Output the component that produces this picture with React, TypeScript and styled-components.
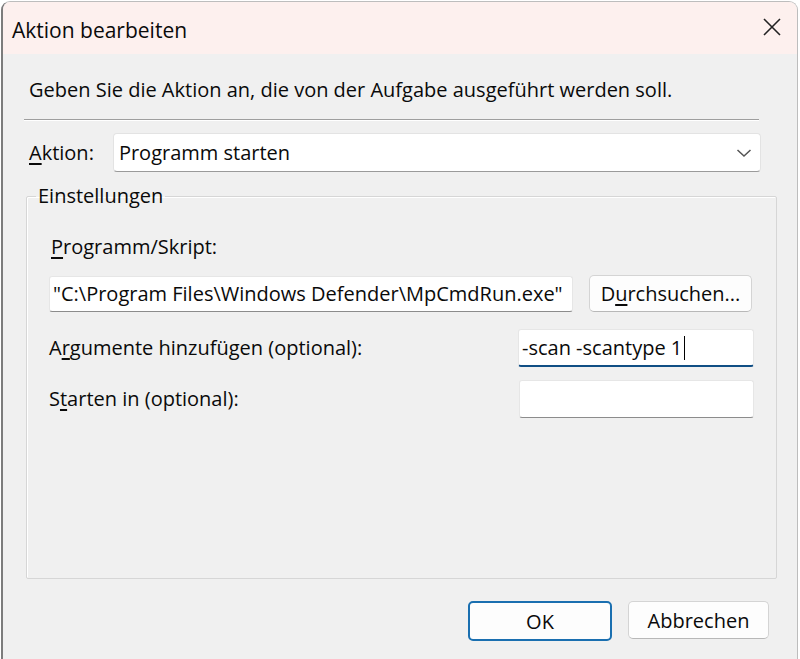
import React from "react";
import styled, { createGlobalStyle } from "styled-components";

const Global = createGlobalStyle`
  html, body { margin: 0; padding: 0; background: #ffffff; }
  body { font-family: "Open Sans", "Noto Sans", sans-serif; color: #0a0a0a; }
  * { box-sizing: border-box; }
`;

const Window = styled.div`
  margin: 1px 2px 0 1px;
  height: 658px;
  display: flex;
  flex-direction: column;
  border: 1px solid #bdbdbd;
  border-left: 2px solid #7c7c7c;
  border-bottom: none;
  border-radius: 9px 9px 0 0;
  background: #f0f0f0;
  overflow: hidden;
  font-size: 20px;
`;

const TitleBar = styled.div`
  height: 52px;
  flex: none;
  display: flex;
  align-items: center;
  justify-content: space-between;
  padding: 3px 13px 0 9px;
  background: #fdf0ee;
`;

const Title = styled.span`
  font-size: 21px;
`;

const CloseButton = styled.button`
  width: 24px;
  height: 24px;
  padding: 0;
  border: none;
  background: transparent;
  display: flex;
  align-items: center;
  justify-content: center;
  margin-top: -6px;
`;

const Body = styled.div`
  flex: 1;
  display: flex;
  flex-direction: column;
  padding: 0 20px 0 21px;
`;

const Description = styled.p`
  margin: 24px 0 0 5px;
  line-height: 24px;
`;

const Separator = styled.div`
  margin: 17px 18px 0 0;
  height: 2px;
  border-top: 1px solid #9e9e9e;
  border-bottom: 1px solid #ffffff;
`;

const ComboRow = styled.div`
  margin: 12px 16px 0 5px;
  display: flex;
  align-items: center;
`;

const Label = styled.label<{ $grow?: boolean }>`
  line-height: 24px;
  flex: ${(p) => (p.$grow ? 1 : "none")};
`;

const Combo = styled.div`
  flex: 1;
  margin-left: 19px;
  height: 39px;
  display: flex;
  align-items: center;
  justify-content: space-between;
  padding: 0 8px 0 5px;
  background: #ffffff;
  border: 1px solid #e3e3e3;
  border-bottom-color: #9a9a9a;
  border-radius: 4px;
`;

const Group = styled.fieldset`
  flex: 1;
  margin: 12px 0 0 2px;
  padding: 0 22px;
  border: 1px solid #d6d6d6;
  border-radius: 2px;
  box-shadow: inset 1px 1px 0 #ffffff;
  min-width: 0;
  display: flex;
  flex-direction: column;
`;

const Legend = styled.legend`
  padding: 0 2px;
  margin-left: -13px;
  line-height: 24px;
`;

const FirstLabel = styled(Label)`
  margin: 27px 0 0 2px;
`;

const InputRow = styled.div<{ $top: number }>`
  display: flex;
  align-items: center;
  margin-top: ${(p) => p.$top}px;
`;

const Field = styled.div<{ $width?: number; $height: number; $focused?: boolean }>`
  ${(p) => (p.$width ? `width: ${p.$width}px; flex: none;` : "flex: 1;")}
  height: ${(p) => p.$height}px;
  display: flex;
  align-items: center;
  padding: 0 3px;
  background: #ffffff;
  border: 1px solid #e6e6e6;
  border-bottom: ${(p) => (p.$focused ? "2px solid #104e84" : "1px solid #8c8c8c")};
  border-radius: 3px;
  white-space: nowrap;
  overflow: hidden;
`;

const Caret = styled.span`
  display: inline-block;
  width: 1px;
  height: 24px;
  margin-left: 2px;
  background: #000;
`;

const Button = styled.button<{ $primary?: boolean; $width: number; $height: number }>`
  width: ${(p) => p.$width}px;
  height: ${(p) => p.$height}px;
  flex: none;
  font: inherit;
  color: inherit;
  background: #fdfdfd;
  border-radius: 5px;
  border: ${(p) => (p.$primary ? "2px solid #1a6fb0" : "1px solid #d4d4d4")};
  ${(p) => (p.$primary ? "" : "border-bottom-color: #b8b8b8;")}
  padding: 0;
`;

const BrowseButton = styled(Button)`
  margin: 0 2px 0 16px;
`;

const Footer = styled.div`
  height: 80px;
  flex: none;
  display: flex;
  justify-content: flex-end;
  align-items: flex-start;
  gap: 16px;
  padding: 22px 8px 0 0;
`;

const Key = styled.u`
  text-underline-offset: 3px;
`;

export default function App() {
  return (
    <>
      <Global />
      <Window>
        <TitleBar>
          <Title>Aktion bearbeiten</Title>
          <CloseButton aria-label="Schließen">
            <svg width="20" height="20" viewBox="0 0 20 20">
              <path d="M2 2 L18 18 M18 2 L2 18" stroke="#222" strokeWidth="1.6" fill="none" />
            </svg>
          </CloseButton>
        </TitleBar>
        <Body>
          <Description>Geben Sie die Aktion an, die von der Aufgabe ausgeführt werden soll.</Description>
          <Separator />
          <ComboRow>
            <Label>
              <Key>A</Key>ktion:
            </Label>
            <Combo>
              <span>Programm starten</span>
              <svg width="16" height="10" viewBox="0 0 16 10">
                <path d="M1.5 2 L8 8 L14.5 2" stroke="#555" strokeWidth="1.5" fill="none" />
              </svg>
            </Combo>
          </ComboRow>
          <Group>
            <Legend>Einstellungen</Legend>
            <FirstLabel>
              <Key>P</Key>rogramm/Skript:
            </FirstLabel>
            <InputRow $top={16}>
              <Field $height={36}>"C:\Program Files\Windows Defender\MpCmdRun.exe"</Field>
              <BrowseButton $width={163} $height={37}>
                D<Key>u</Key>rchsuchen...
              </BrowseButton>
            </InputRow>
            <InputRow $top={17}>
              <Label $grow>
                A<Key>r</Key>gumente hinzufügen (optional):
              </Label>
              <Field $width={236} $height={38} $focused>
                -scan -scantype 1<Caret />
              </Field>
            </InputRow>
            <InputRow $top={13}>
              <Label $grow>
                S<Key>t</Key>arten in (optional):
              </Label>
              <Field $width={235} $height={38} />
            </InputRow>
          </Group>
          <Footer>
            <Button $primary $width={144} $height={40}>OK</Button>
            <Button $width={141} $height={38}>Abbrechen</Button>
          </Footer>
        </Body>
      </Window>
    </>
  );
}
